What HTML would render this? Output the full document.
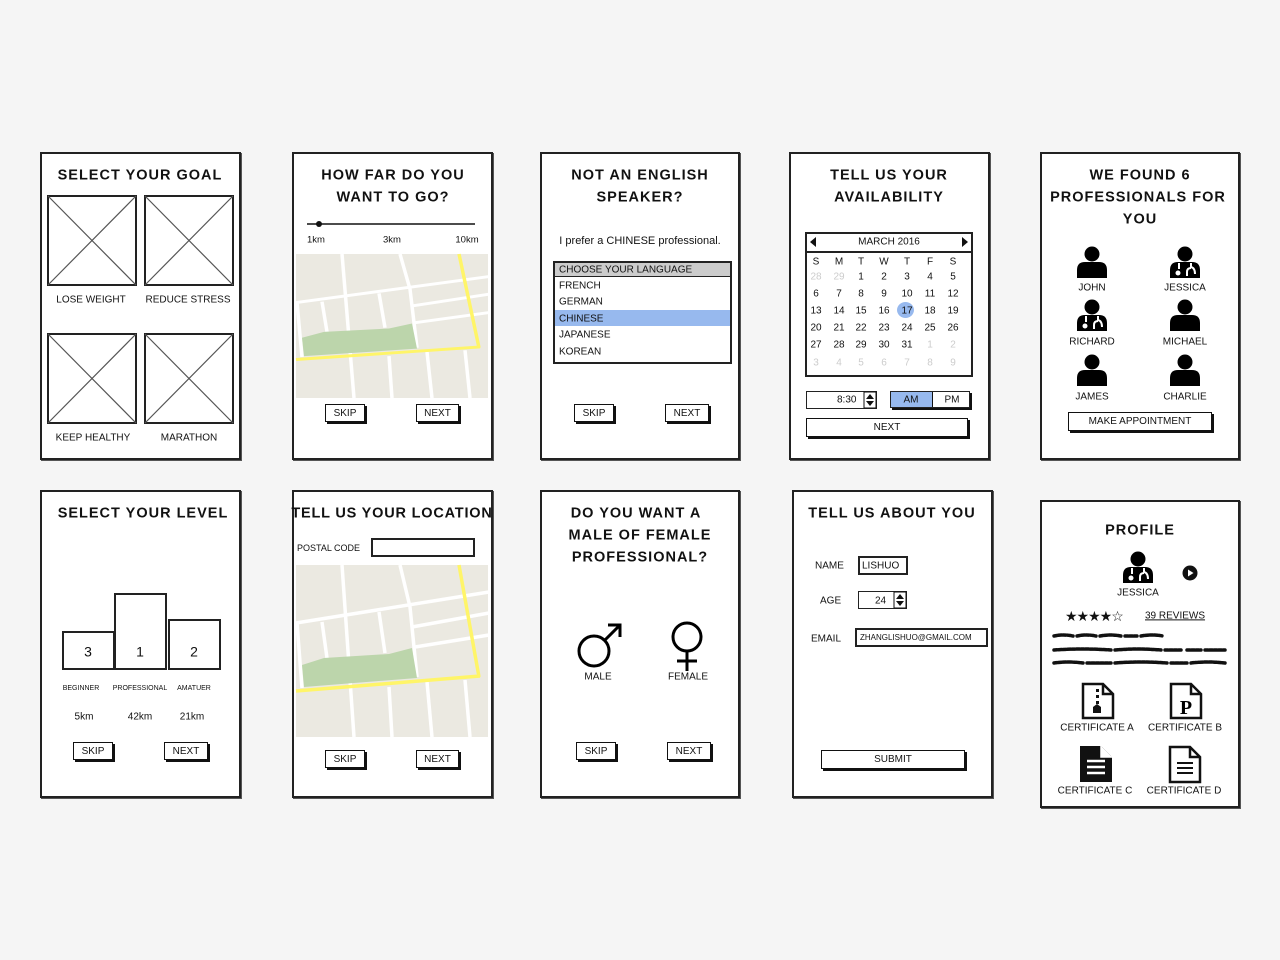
<!DOCTYPE html>
<html><head><meta charset="utf-8"><style>
body{margin:0;width:1280px;height:960px;background:#f5f5f5;position:relative;overflow:hidden;font-family:"Liberation Sans",sans-serif;color:#111}
.p{position:absolute;background:#fff;border:2px solid #222;box-sizing:border-box;box-shadow:1px 1px 0 #555}
.t{position:absolute;transform:translate(-50%,-42%);white-space:nowrap;font-size:10px}
.h{font-weight:bold;font-size:14.5px;letter-spacing:1px}
.b{position:absolute;background:#fff;border:1.5px solid #111;box-shadow:2px 2px 0 #111;box-sizing:border-box;font-size:10px;text-align:center;padding-top:1px}
.l{position:absolute;transform:translateY(-42%);white-space:nowrap;font-size:10px}
.bx{position:absolute;border:2px solid #222;box-sizing:border-box;background:#fff}
svg{position:absolute;overflow:visible}
</style></head><body>

<svg width="0" height="0" style="position:absolute">
<defs>
<g id="map">
<rect width="192" height="172" fill="#ebe9e1"/>
<g stroke="#fff" stroke-width="3.5" fill="none">
<path d="M46 0L58 172M104 0L114 42L121 112M131 117L136 172M0 58L193 27M116 62L193 48M119 82L193 70M26 57L31 93M83 47L89 88M93 122L96 172M169 115L174 172M1 58L6 123"/>
</g>
<path d="M6 100L28 93L93 89L116 83L121 113L8 122Z" fill="#bcd5ab"/>
<path d="M163 0L183 112M0 126L184 111" stroke="#fff568" stroke-width="3.5" fill="none"/>
</g>
<g id="person"><circle cx="15" cy="7" r="7.5"/><path d="M0 31V23Q0 15 8 15H22Q30 15 30 23V31Z"/></g>
<g id="doc"><circle cx="15" cy="7" r="7.5"/><path d="M0 31V23Q0 15 8 15H22Q30 15 30 23V31Z"/><g stroke="#fff" stroke-width="2" fill="none"><path d="M9 16V22M21 16V20Q25 21 25 27"/><circle cx="8" cy="26" r="2.5" fill="#fff" stroke="none"/><path d="M17 29V25Q17 21 21 21"/></g></g>
</defs></svg>

<!-- Panel 1 -->
<div class="p" style="left:40px;top:152px;width:201px;height:308px"></div>
<div class="t h" style="left:140px;top:174px">SELECT YOUR GOAL</div>
<svg style="left:47px;top:195px" width="190" height="230">
<g fill="none" stroke="#222" stroke-width="2"><rect x="1" y="1" width="88" height="89"/><rect x="98" y="1" width="88" height="89"/><rect x="1" y="139" width="88" height="89"/><rect x="98" y="139" width="88" height="89"/></g>
<g stroke="#555" stroke-width="1.2"><path d="M1 1L89 90M89 1L1 90M98 1L186 90M186 1L98 90M1 139L89 228M89 139L1 228M98 139L186 228M186 139L98 228"/></g>
</svg>
<div class="t" style="left:91px;top:299px">LOSE WEIGHT</div>
<div class="t" style="left:188px;top:299px">REDUCE STRESS</div>
<div class="t" style="left:93px;top:437px">KEEP HEALTHY</div>
<div class="t" style="left:189px;top:437px">MARATHON</div>

<!-- Panel 2 -->
<div class="p" style="left:292px;top:152px;width:201px;height:308px"></div>
<div class="t h" style="left:393px;top:174px">HOW FAR DO YOU</div>
<div class="t h" style="left:393px;top:196px">WANT TO GO?</div>
<svg style="left:307px;top:220px" width="170" height="10"><path d="M0 4H168" stroke="#111" stroke-width="1.5"/><circle cx="12" cy="4" r="3" fill="#111"/></svg>
<div class="t" style="left:316px;top:239px;font-size:9.5px">1km</div>
<div class="t" style="left:392px;top:239px;font-size:9.5px">3km</div>
<div class="t" style="left:467px;top:239px;font-size:9.5px">10km</div>
<svg style="left:296px;top:254px" width="192" height="144" viewBox="0 0 192 172" preserveAspectRatio="none"><use href="#map"/></svg>
<div class="b" style="left:325px;top:404px;width:40px;height:18px;line-height:15px">SKIP</div>
<div class="b" style="left:416px;top:404px;width:43px;height:18px;line-height:15px">NEXT</div>

<!-- Panel 3 -->
<div class="p" style="left:540px;top:152px;width:200px;height:308px"></div>
<div class="t h" style="left:640px;top:174px">NOT AN ENGLISH</div>
<div class="t h" style="left:640px;top:196px">SPEAKER?</div>
<div class="t" style="left:640px;top:240px;font-size:11px">I prefer a CHINESE professional.</div>
<div class="bx" style="left:553px;top:261px;width:179px;height:103px"></div>
<div style="position:absolute;left:555px;top:263px;width:175px;height:13px;background:#ccc;border-bottom:1.5px solid #222"></div>
<div class="l" style="left:559px;top:269px">CHOOSE YOUR LANGUAGE</div>
<div style="position:absolute;left:555px;top:310px;width:175px;height:16px;background:#97b9ee"></div>
<div class="l" style="left:559px;top:285px">FRENCH</div>
<div class="l" style="left:559px;top:301px">GERMAN</div>
<div class="l" style="left:559px;top:318px">CHINESE</div>
<div class="l" style="left:559px;top:334px">JAPANESE</div>
<div class="l" style="left:559px;top:351px">KOREAN</div>
<div class="b" style="left:574px;top:404px;width:40px;height:18px;line-height:15px">SKIP</div>
<div class="b" style="left:665px;top:404px;width:44px;height:18px;line-height:15px">NEXT</div>

<!-- Panel 4 -->
<div class="p" style="left:789px;top:152px;width:201px;height:308px"></div>
<div class="t h" style="left:889px;top:174px">TELL US YOUR</div>
<div class="t h" style="left:889px;top:196px">AVAILABILITY</div>
<div class="bx" style="left:805px;top:232px;width:168px;height:145px"></div>
<div style="position:absolute;left:805px;top:251px;width:168px;height:2px;background:#222"></div>
<svg style="left:810px;top:236px" width="160" height="12"><path d="M0 6L6 1V11Z M158 6L152 1V11Z" fill="#111"/></svg>
<div class="t" style="left:889px;top:241px">MARCH 2016</div>
<div style="position:absolute;left:897px;top:302px;width:17px;height:16px;border-radius:50%;background:#97b9ee"></div>
<div id="cal"></div>
<div class="bx" style="left:806px;top:391px;width:71px;height:18px;border-width:1.5px"></div>
<div class="l" style="left:837px;top:399px">8:30</div>
<svg style="left:864px;top:392px" width="12" height="16"><rect x="0" y="0" width="12" height="16" fill="#fff" stroke="#111"/><path d="M6 2L10 7H2Z M6 14L10 9H2Z" fill="#111"/></svg>
<div class="bx" style="left:890px;top:391px;width:80px;height:17px;border-width:1.5px;box-shadow:2px 2px 0 #111"></div>
<div style="position:absolute;left:891px;top:392px;width:41px;height:15px;background:#97b9ee;border-right:1.5px solid #111"></div>
<div class="t" style="left:911px;top:399px">AM</div>
<div class="t" style="left:952px;top:399px">PM</div>
<div class="b" style="left:806px;top:418px;width:162px;height:19px;line-height:16px">NEXT</div>

<!-- Panel 5 -->
<div class="p" style="left:1040px;top:152px;width:200px;height:308px"></div>
<div class="t h" style="left:1140px;top:174px">WE FOUND 6</div>
<div class="t h" style="left:1138px;top:196px">PROFESSIONALS FOR</div>
<div class="t h" style="left:1140px;top:218px">YOU</div>
<svg style="left:1077px;top:247px" width="30" height="31"><use href="#person"/></svg>
<svg style="left:1170px;top:247px" width="30" height="31"><use href="#doc"/></svg>
<svg style="left:1077px;top:300px" width="30" height="31"><use href="#doc"/></svg>
<svg style="left:1170px;top:300px" width="30" height="31"><use href="#person"/></svg>
<svg style="left:1077px;top:355px" width="30" height="31"><use href="#person"/></svg>
<svg style="left:1170px;top:355px" width="30" height="31"><use href="#person"/></svg>
<div class="t" style="left:1092px;top:287px">JOHN</div>
<div class="t" style="left:1185px;top:287px">JESSICA</div>
<div class="t" style="left:1092px;top:341px">RICHARD</div>
<div class="t" style="left:1185px;top:341px">MICHAEL</div>
<div class="t" style="left:1092px;top:396px">JAMES</div>
<div class="t" style="left:1185px;top:396px">CHARLIE</div>
<div class="b" style="left:1068px;top:412px;width:144px;height:19px;line-height:16px">MAKE APPOINTMENT</div>

<!-- Row 2 Panel 1 -->
<div class="p" style="left:40px;top:490px;width:201px;height:308px"></div>
<div class="t h" style="left:143px;top:512px">SELECT YOUR LEVEL</div>
<div class="bx" style="left:62px;top:631px;width:53px;height:39px"></div>
<div class="bx" style="left:114px;top:593px;width:53px;height:77px"></div>
<div class="bx" style="left:168px;top:619px;width:53px;height:51px"></div>
<div class="t" style="left:88px;top:650px;font-size:14px">3</div>
<div class="t" style="left:140px;top:650px;font-size:14px">1</div>
<div class="t" style="left:194px;top:650px;font-size:14px">2</div>
<div class="t" style="left:81px;top:688px;font-size:7px">BEGINNER</div>
<div class="t" style="left:140px;top:688px;font-size:7px">PROFESSIONAL</div>
<div class="t" style="left:194px;top:688px;font-size:7px">AMATUER</div>
<div class="t" style="left:84px;top:716px">5km</div>
<div class="t" style="left:140px;top:716px">42km</div>
<div class="t" style="left:192px;top:716px">21km</div>
<div class="b" style="left:73px;top:742px;width:40px;height:18px;line-height:15px">SKIP</div>
<div class="b" style="left:164px;top:742px;width:44px;height:18px;line-height:15px">NEXT</div>

<!-- Row 2 Panel 2 -->
<div class="p" style="left:292px;top:490px;width:201px;height:308px"></div>
<div class="t h" style="left:392px;top:512px;letter-spacing:0.8px">TELL US YOUR LOCATION</div>
<div class="l" style="left:297px;top:547px;font-size:9px">POSTAL CODE</div>
<div class="bx" style="left:371px;top:538px;width:104px;height:19px"></div>
<svg style="left:296px;top:565px" width="192" height="172" viewBox="0 0 192 172"><use href="#map"/></svg>
<div class="b" style="left:325px;top:750px;width:40px;height:18px;line-height:15px">SKIP</div>
<div class="b" style="left:416px;top:750px;width:43px;height:18px;line-height:15px">NEXT</div>

<!-- Row 2 Panel 3 -->
<div class="p" style="left:540px;top:490px;width:200px;height:308px"></div>
<div class="t h" style="left:636px;top:512px">DO YOU WANT A</div>
<div class="t h" style="left:640px;top:534px">MALE OF FEMALE</div>
<div class="t h" style="left:640px;top:556px">PROFESSIONAL?</div>
<svg style="left:570px;top:618px" width="140" height="60" fill="none" stroke="#000" stroke-width="3">
<circle cx="24" cy="33" r="15"/><path d="M35 22L50 7M38 7H50V19"/>
<circle cx="117" cy="19" r="14"/><path d="M117 33V53M107 43H127"/>
</svg>
<div class="t" style="left:598px;top:676px">MALE</div>
<div class="t" style="left:688px;top:676px">FEMALE</div>
<div class="b" style="left:576px;top:742px;width:40px;height:18px;line-height:15px">SKIP</div>
<div class="b" style="left:667px;top:742px;width:44px;height:18px;line-height:15px">NEXT</div>

<!-- Row 2 Panel 4 -->
<div class="p" style="left:792px;top:490px;width:201px;height:308px"></div>
<div class="t h" style="left:892px;top:512px">TELL US ABOUT YOU</div>
<div class="l" style="left:815px;top:565px">NAME</div>
<div class="bx" style="left:858px;top:556px;width:50px;height:19px"></div>
<div class="l" style="left:862px;top:565px">LISHUO</div>
<div class="l" style="left:820px;top:600px">AGE</div>
<div class="bx" style="left:858px;top:591px;width:49px;height:18px;border-width:1.5px"></div>
<div class="l" style="left:875px;top:600px">24</div>
<svg style="left:894px;top:592px" width="12" height="16"><rect x="0" y="0" width="12" height="16" fill="#fff" stroke="#111"/><path d="M6 2L10 7H2Z M6 14L10 9H2Z" fill="#111"/></svg>
<div class="l" style="left:811px;top:638px">EMAIL</div>
<div class="bx" style="left:855px;top:628px;width:133px;height:19px"></div>
<div class="l" style="left:860px;top:637px;font-size:8px">ZHANGLISHUO@GMAIL.COM</div>
<div class="b" style="left:821px;top:750px;width:144px;height:19px;line-height:16px">SUBMIT</div>

<!-- Row 2 Panel 5 -->
<div class="p" style="left:1040px;top:500px;width:200px;height:308px"></div>
<div class="t h" style="left:1140px;top:529px">PROFILE</div>
<svg style="left:1123px;top:552px" width="30" height="31"><use href="#doc"/></svg>
<svg style="left:1182px;top:565px" width="16" height="16"><circle cx="8" cy="8" r="7.5" fill="#111"/><path d="M6 4.5L11.5 8L6 11.5Z" fill="#fff"/></svg>
<div class="t" style="left:1138px;top:592px">JESSICA</div>
<div class="l" style="left:1065px;top:615px;font-size:14px;letter-spacing:-1px">★★★★☆</div>
<div class="l" style="left:1145px;top:615px;text-decoration:underline">39 REVIEWS</div>
<svg style="left:1053px;top:630px" width="176" height="40" stroke="#111" stroke-width="3.5" fill="none" stroke-linecap="round" stroke-dasharray="3 1.5">
<path d="M1 6Q10 4 20 6M24 6Q33 4 43 6M47 6Q58 4 68 6M72 6H84M88 6Q99 4 110 6"/>
<path d="M1 20Q30 18 58 20M62 20Q85 18 108 20M112 20H128M134 20H148M152 20H172"/>
<path d="M1 33Q15 31 30 33M34 33H58M62 33Q88 31 114 33M118 33H134M138 33Q155 31 172 33"/>
</svg>
<svg style="left:1080px;top:683px" width="140" height="100">
<g fill="none" stroke="#111" stroke-width="2.5"><path d="M3 1H23L33 11V35H3Z M23 1V11H33"/><path d="M91 1H111L121 11V35H91Z M111 1V11H121"/><path d="M90 64H110L120 74V99H90Z M110 64V74H120"/></g>
<path d="M16 6h3v3h-3zM16 12h3v3h-3zM16 18h3v3h-3zM13 24L17 21L21 24V30H13Z" fill="#111"/>
<text x="106" y="31" font-family="Liberation Serif" font-weight="bold" font-size="20" text-anchor="middle">P</text>
<path d="M0 63H21L32 74V99H0Z" fill="#111"/><path d="M21 63V74H32" fill="#fff" stroke="#fff" stroke-width="1.5"/>
<path d="M7 78H25M7 84H25M7 90H25" stroke="#fff" stroke-width="2.5"/>
<path d="M97 80H113M97 85H113M97 90H113" stroke="#111" stroke-width="2"/>
</svg>
<div class="t" style="left:1097px;top:727px">CERTIFICATE A</div>
<div class="t" style="left:1185px;top:727px">CERTIFICATE B</div>
<div class="t" style="left:1095px;top:790px">CERTIFICATE C</div>
<div class="t" style="left:1184px;top:790px">CERTIFICATE D</div>

<script>
(function(){
var xs=[814,837,859,882,905,928,951],ys=[261,276,293,310,327,344,362];
var rows=[["S","M","T","W","T","F","S"],["28","29","1","2","3","4","5"],["6","7","8","9","10","11","12"],["13","14","15","16","17","18","19"],["20","21","22","23","24","25","26"],["27","28","29","30","31","1","2"],["3","4","5","6","7","8","9"]];
var h="";
for(var r=0;r<7;r++)for(var c=0;c<7;c++){
var g=(r==1&&c<2)||(r==5&&c>4)||r==6;
h+='<div class="t" style="left:'+(xs[c]+2)+'px;top:'+ys[r]+'px;color:'+(g?'#ccc':'#111')+'">'+rows[r][c]+'</div>';}
document.getElementById('cal').innerHTML=h;
})();
</script>
</body></html>
